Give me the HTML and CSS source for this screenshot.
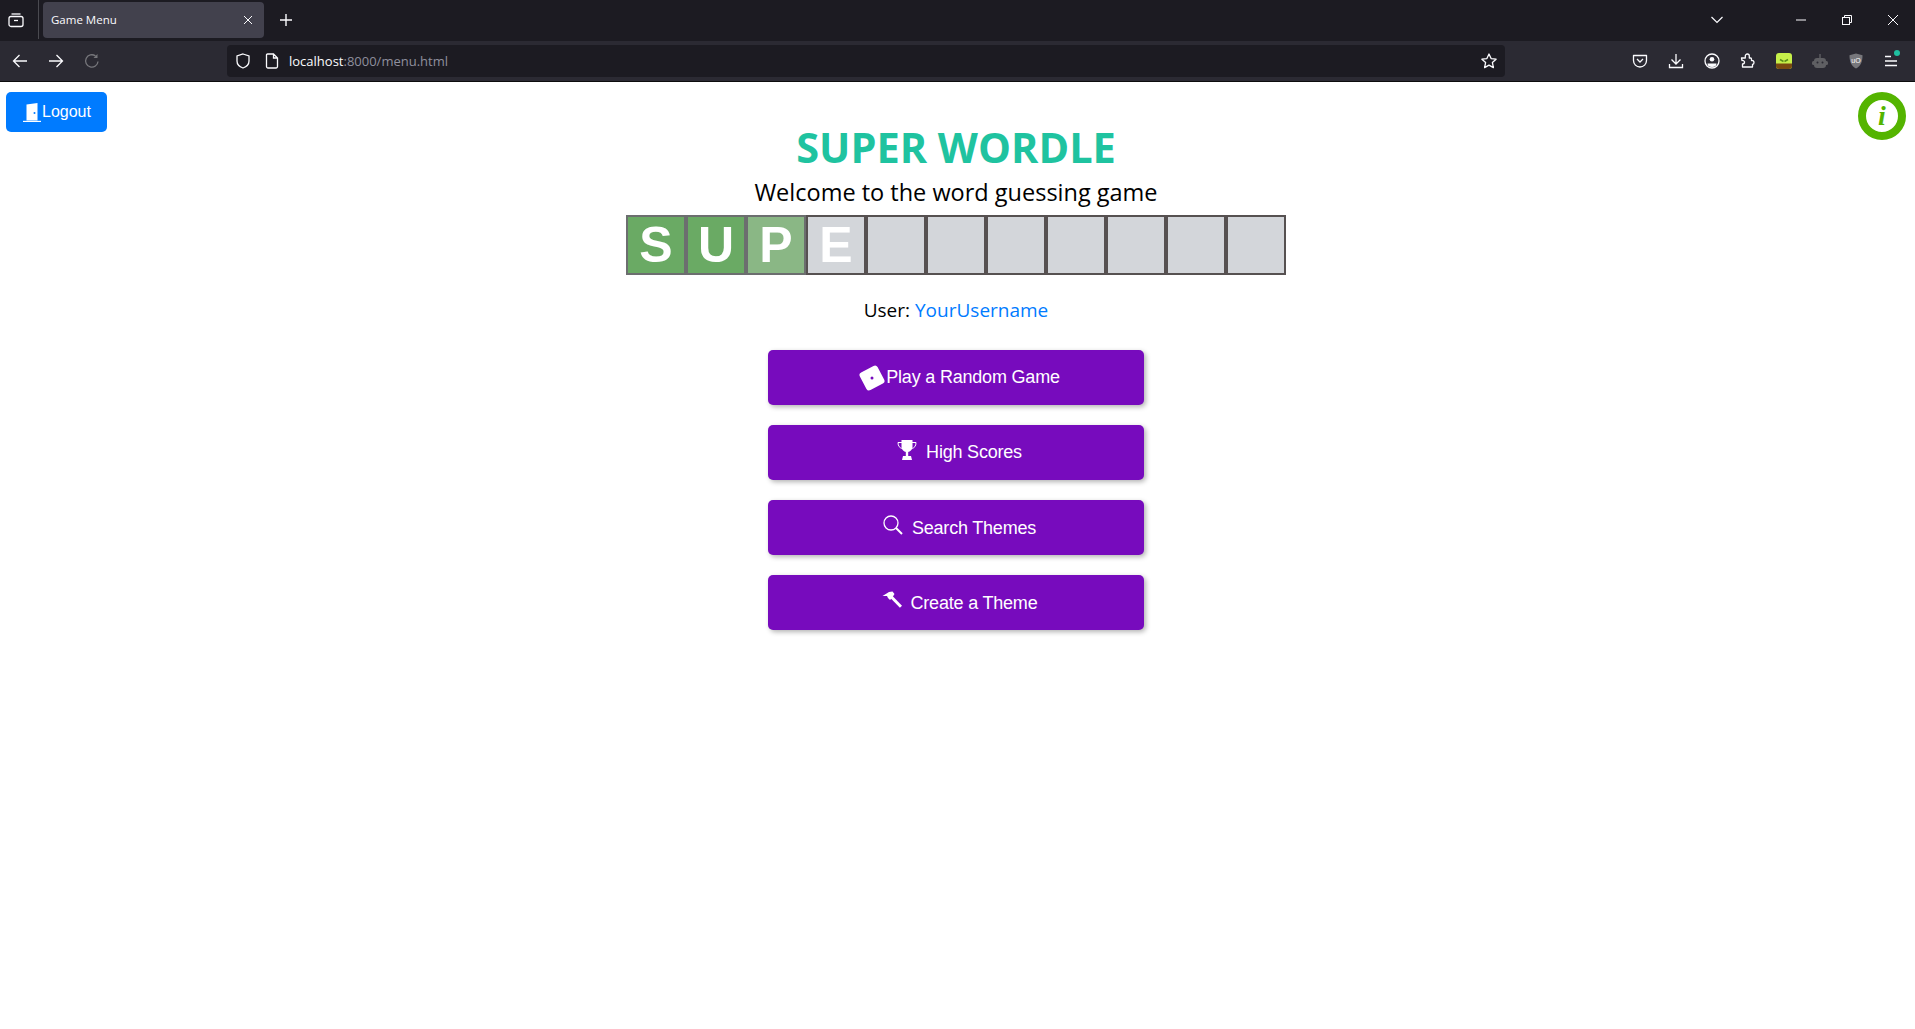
FILE: index.html
```html
<!DOCTYPE html>
<html lang="en">
<head>
    <meta charset="UTF-8">
    <meta name="viewport" content="width=device-width, initial-scale=1.0">
    <title>Game Menu</title>
    <link rel="stylesheet" href="styles.css">
</head>
<body>

<div class="tabbar">
    <div class="tab-list-btn">
        <svg width="16" height="16" viewBox="0 0 16 16" fill="none" stroke="#fbfbfe" stroke-width="1.3"><path d="M3.500 2h9"/><rect x="1" y="4.500" width="14" height="10" rx="2"/><path d="M6 8.500h4"/></svg>
    </div>
    <div class="tab">
        <span class="tab-title">Game Menu</span>
        <svg width="10" height="10" viewBox="0 0 10 10" stroke="#fbfbfe" stroke-width="1"><path d="M1 1l8 8M9 1l-8 8"/></svg>
    </div>
    <svg class="new-tab" width="14" height="14" viewBox="0 0 14 14" stroke="#fbfbfe" stroke-width="1.4"><path d="M7 1v12M1 7h12"/></svg>
    <div class="window-btns">
        <svg class="tabs-down" width="14" height="8" viewBox="0 0 14 8" fill="none" stroke="#fbfbfe" stroke-width="1.2"><path d="M1.500 1L7 6.500 12.500 1"/></svg>
        <svg width="10" height="10" viewBox="0 0 10 10" stroke="#fbfbfe"><path d="M0 5h10"/></svg>
        <svg width="10" height="10" viewBox="0 0 10 10" fill="none" stroke="#fbfbfe"><rect x=".5" y="2.500" width="7" height="7"/><path d="M2.500 2.500V.5h7v7h-2"/></svg>
        <svg width="10" height="10" viewBox="0 0 10 10" stroke="#fbfbfe"><path d="M0 0l10 10M10 0L0 10"/></svg>
    </div>
</div>

<div class="toolbar">
    <div class="nav-btns">
        <svg width="16" height="16" viewBox="0 0 16 16" fill="none" stroke="#fbfbfe" stroke-width="1.3"><path d="M15 8H1.500M7.500 2L1.500 8l6 6"/></svg>
        <svg width="16" height="16" viewBox="0 0 16 16" fill="none" stroke="#fbfbfe" stroke-width="1.3"><path d="M1 8h13.500M8.500 2l6 6-6 6"/></svg>
        <svg width="16" height="16" viewBox="0 0 16 16" fill="none" stroke="#77777c" stroke-width="1.3"><path d="M14 8.500A6.200 6.200 0 1 1 11.500 3"/><path d="M13.500 1v4h-4" fill="#77777c" stroke="none"/></svg>
    </div>
    <div class="urlbar">
        <svg width="16" height="16" viewBox="0 0 16 16" fill="none" stroke="#fbfbfe" stroke-width="1.3"><path d="M8 1l6 2v5c0 3.500-3 6-6 7-3-1-6-3.500-6-7V3z"/></svg>
        <svg class="page-icon" width="14" height="16" viewBox="0 0 14 16" fill="none" stroke="#fbfbfe" stroke-width="1.3"><path d="M2.500 1h6l4 4v8.500a1.500 1.500 0 0 1-1.500 1.500H3a1.500 1.500 0 0 1-1.500-1.500V2A1 1 0 0 1 2.500 1zM8.500 1v4h4"/></svg>
        <span class="url"><span class="url-host">localhost</span>:8000/menu.html</span>
        <svg class="star" width="16" height="16" viewBox="0 0 16 16" fill="none" stroke="#fbfbfe" stroke-width="1.3" stroke-linejoin="round"><path d="M8 1l2.100 4.600 5 .6-3.700 3.400 1 5L8 12.100 3.600 14.600l1-5L.9 6.200l5-.6z"/></svg>
    </div>
    <div class="tools">
        <svg width="16" height="16" viewBox="0 0 16 16" fill="none" stroke="#fbfbfe" stroke-width="1.3"><path d="M1.500 2.500h13v5a6.500 6.500 0 0 1-13 0z" stroke-linejoin="round"/><path d="M5 6l3 3 3-3"/></svg>
        <svg width="16" height="16" viewBox="0 0 16 16" fill="none" stroke="#fbfbfe" stroke-width="1.3"><path d="M8 1v10M3.500 6.500L8 11l4.500-4.500M1.500 11v3.500h13V11"/></svg>
        <svg width="16" height="16" viewBox="0 0 16 16" fill="none" stroke="#fbfbfe" stroke-width="1.3"><circle cx="8" cy="8" r="7"/><circle cx="8" cy="6.300" r="2.300" fill="#fbfbfe" stroke="none"/><path d="M3.500 10.500h9a4.500 3.500 0 0 1-9 0z" fill="#fbfbfe" stroke="none"/></svg>
        <svg width="16" height="16" viewBox="0 0 16 16" fill="none" stroke="#fbfbfe" stroke-width="1.3" stroke-linejoin="round"><path d="M1.500 5h3.800V3a2 2 0 0 1 4 0v2h1.200a1 1 0 0 1 1 1v1.500a2 2 0 0 1 2.500 2 2 2 0 0 1-1.500 2v2.500H2.500V11a2 2 0 0 0 2-2 2 2 0 0 0-2.500-1.500z"/></svg>
        <svg width="16" height="16" viewBox="0 0 16 16"><rect width="16" height="16" rx="3" fill="#c6f04a"/><path d="M0 10.500h16V13a3 3 0 0 1-3 3H3a3 3 0 0 1-3-3z" fill="#7a4a10"/><path d="M4 6.500l3.500 2M12 6.500L8.500 8.500" stroke="#5b8f1a" stroke-width="1.500"/></svg>
        <svg width="16" height="16" viewBox="0 0 16 16" fill="#5f5f63"><rect x="2" y="5" width="12" height="10" rx="3"/><rect x="0" y="8" width="16" height="4" rx="1.500"/><rect x="7.300" y="1" width="1.400" height="4"/><circle cx="5.500" cy="9.500" r="1" fill="#2b2a33"/><circle cx="10.500" cy="9.500" r="1" fill="#2b2a33"/></svg>
        <svg width="16" height="16" viewBox="0 0 16 16"><path d="M8 .5l6.500 1.800c0 6-1.500 10.700-6.500 13.200C3 13 1.500 8.300 1.500 2.300z" fill="#77777c"/><text class="ublock-text" x="8" y="9.500" text-anchor="middle">uO</text></svg>
        <div class="menu-btn">
            <svg width="14" height="12" viewBox="0 0 14 12" stroke="#fbfbfe" stroke-width="1.300"><path d="M1 1.500h6M1 6h12M1 10.500h12"/></svg>
            <span class="menu-dot"></span>
        </div>
    </div>
</div>

<div class="page">
    <button class="logout-btn">
        <svg width="18" height="19" viewBox="0 0 18 19" fill="#fff"><path d="M3.500 1.500L14.500 0v17.500h-11z"/><path d="M0 17.800h18V19H0z"/><circle cx="11.500" cy="10" r="1" fill="#007bff"/></svg>Logout
    </button>

    <div class="menu">
        <h1 class="title">SUPER WORDLE</h1>
        <p class="subtitle">Welcome to the word guessing game</p>

        <div class="tiles" id="tiles"></div>

        <p class="user">User: <span class="username">YourUsername</span></p>

        <button class="menu-item gap-1">
            <svg width="26" height="26" viewBox="0 0 26 26"><rect x="3" y="3" width="20" height="20" rx="3" fill="#fff" transform="rotate(-28 13 13)"/><circle cx="13" cy="13" r="1.500" fill="#770bbd"/></svg><span>Play a Random Game</span>
        </button>
        <button class="menu-item gap-9">
            <svg class="lift" width="20" height="20" viewBox="0 0 20 20" fill="#fff"><path d="M4.500 0h11v6.500a5.500 5.500 0 0 1-11 0z"/><path d="M8.800 11h2.400v5H8.800zM6 16h8l1 4H5z"/><path d="M5 2.500H1c0 3.500 1.500 5.500 4.500 6M15 2.500h4c0 3.500-1.500 5.500-4.500 6" fill="none" stroke="#fff"/></svg><span>High Scores</span>
        </button>
        <button class="menu-item gap-9 text-low">
            <svg class="lift" width="20" height="20" viewBox="0 0 20 20" fill="none" stroke="#fff"><circle cx="8" cy="8" r="7" stroke-width="1.300"/><path d="M13 13l6 6" stroke-width="2"/></svg><span>Search Themes</span>
        </button>
        <button class="menu-item gap-9 text-low">
            <svg class="lift" width="20" height="18" viewBox="0 0 20 18" fill="#fff"><path d="M.5 5L7 1l3.500-.5L12.500 3 10 7 8 9 6 7 5 5z"/><path d="M9 5.500l10 10.300" fill="none" stroke="#fff" stroke-width="3"/></svg><span>Create a Theme</span>
        </button>
    </div>

    <div class="info-btn"><span>i</span></div>
</div>

<script>
    // Tile row: word letters with their colour state
    const tileData = [
        ['S', 'tile-green'], ['U', 'tile-green'], ['P', 'tile-fading'], ['E', ''],
        ['', ''], ['', ''], ['', ''], ['', ''], ['', ''], ['', ''], ['', '']
    ];
    const tiles = document.getElementById('tiles');
    tileData.forEach(([letter, cls]) => {
        const tile = document.createElement('div');
        tile.className = ('tile ' + cls).trim();
        tile.textContent = letter;
        tiles.appendChild(tile);
    });
</script>

</body>
</html>
```

FILE: styles.css
```css
* {
    box-sizing: border-box;
}
html, body {
    margin: 0;
    height: 100%;
}
body {
    display: flex;
    flex-direction: column;
    background: #fff;
    font-family: "Liberation Sans", Arial, sans-serif;
    overflow: hidden;
}

/* browser chrome */
.tabbar {
    display: flex;
    align-items: center;
    height: 41px;
    padding-bottom: 2px;
    background: #1c1b22;
}
.tab-list-btn {
    display: flex;
    align-items: center;
    width: 39px;
    height: 39px;
    padding-left: 8px;
    border-right: 1px solid #4a4a50;
}
.tab {
    display: flex;
    align-items: center;
    justify-content: space-between;
    width: 221px;
    height: 36px;
    margin-left: 4px;
    padding: 0 11px 0 8px;
    border-radius: 4px;
    background: #42414d;
    color: #fbfbfe;
    font-family: "Open Sans", sans-serif;
    font-size: 11.500px;
}
.new-tab {
    margin-left: 15px;
}
.window-btns {
    display: flex;
    align-items: center;
    gap: 36px;
    margin-left: auto;
    padding-right: 17px;
}
.tabs-down {
    margin-right: 36px;
}
.toolbar {
    display: flex;
    align-items: center;
    height: 41px;
    background: #2b2a33;
    border-bottom: 1px solid #0c0c0d;
}
.nav-btns {
    display: flex;
    gap: 20px;
    width: 227px;
    padding-left: 12px;
}
.urlbar {
    display: flex;
    align-items: center;
    width: 1278px;
    height: 32px;
    padding: 0 8px 0 8px;
    border-radius: 4px;
    background: #1c1b22;
}
.page-icon {
    margin-left: 14px;
}
.url {
    margin-left: 10px;
    color: #8f8f9d;
    font-family: "Open Sans", sans-serif;
    font-size: 13px;
}
.url-host {
    color: #fbfbfe;
}
.star {
    margin-left: auto;
}
.tools {
    display: flex;
    align-items: center;
    gap: 20px;
    margin-left: 127px;
}
.ublock-text {
    fill: #fff;
    font-size: 7px;
    font-family: "Liberation Sans", sans-serif;
}
.menu-btn {
    position: relative;
    display: flex;
}
.menu-dot {
    position: absolute;
    top: -5px;
    right: -2px;
    width: 6px;
    height: 6px;
    border-radius: 50%;
    background: #1fc0a0;
}

/* page */
.page {
    flex: 1;
    display: grid;
    grid-template-columns: 1fr auto 1fr;
    align-items: start;
}
.logout-btn {
    justify-self: start;
    display: flex;
    align-items: center;
    width: 101px;
    height: 40px;
    margin: 10px 0 0 6px;
    padding: 0 0 0 17px;
    border: none;
    border-radius: 5px;
    background: #007bff;
    color: #fff;
    font-family: "Liberation Sans", Arial, sans-serif;
    font-size: 16px;
}
.logout-btn svg {
    margin-right: 1px;
}
.menu {
    display: flex;
    flex-direction: column;
    align-items: center;
    padding-right: 3px;
}
.title {
    margin: 38px 0 0;
    color: #1fc3a0;
    font-family: "Open Sans", sans-serif;
    font-size: 41.500px;
    line-height: 54px;
}
.subtitle {
    margin: 2px 0 0;
    color: #000;
    font-family: "Open Sans", sans-serif;
    font-size: 23.500px;
    line-height: 33px;
}
.tiles {
    display: flex;
    margin-top: 6px;
}
.tile {
    display: flex;
    align-items: center;
    justify-content: center;
    width: 60px;
    height: 60px;
    border: 2px solid #565151;
    background: #d3d6da;
    color: #fff;
    font-size: 50px;
    font-weight: bold;
}
.tile-green {
    border-color: #6c6e6f;
    background: #6aaa64;
}
.tile-fading {
    border-color: #6c6e6f;
    background: #8ab785;
}
.user {
    margin: 21px 0 0;
    font-family: "Open Sans", sans-serif;
    font-size: 19px;
    line-height: 28px;
}
.username {
    color: #007bff;
}
.menu-item {
    display: flex;
    align-items: center;
    justify-content: center;
    width: 376px;
    height: 55px;
    margin-bottom: 20px;
    padding: 0 0 0 7px;
    border: none;
    border-radius: 5px;
    background: #770bbd;
    box-shadow: 2px 2px 5px rgba(0, 0, 0, 0.3);
    color: #fff;
    font-family: "Liberation Sans", Arial, sans-serif;
    font-size: 18px;
    letter-spacing: -0.2px;
}
.user + .menu-item {
    margin-top: 26px;
}
.gap-1 svg {
    margin-right: 1px;
}
.gap-9 svg {
    margin-right: 9px;
}
.text-low span {
    margin-top: 2px;
}
.lift {
    margin-top: -6px;
}
.info-btn {
    justify-self: end;
    display: flex;
    align-items: center;
    justify-content: center;
    width: 48px;
    height: 48px;
    margin: 10px 9px 0 0;
    border: 8px solid #54b400;
    border-radius: 50%;
    color: #54b400;
    font-family: "Liberation Serif", serif;
    font-size: 28px;
    font-style: italic;
    font-weight: bold;
}
```
